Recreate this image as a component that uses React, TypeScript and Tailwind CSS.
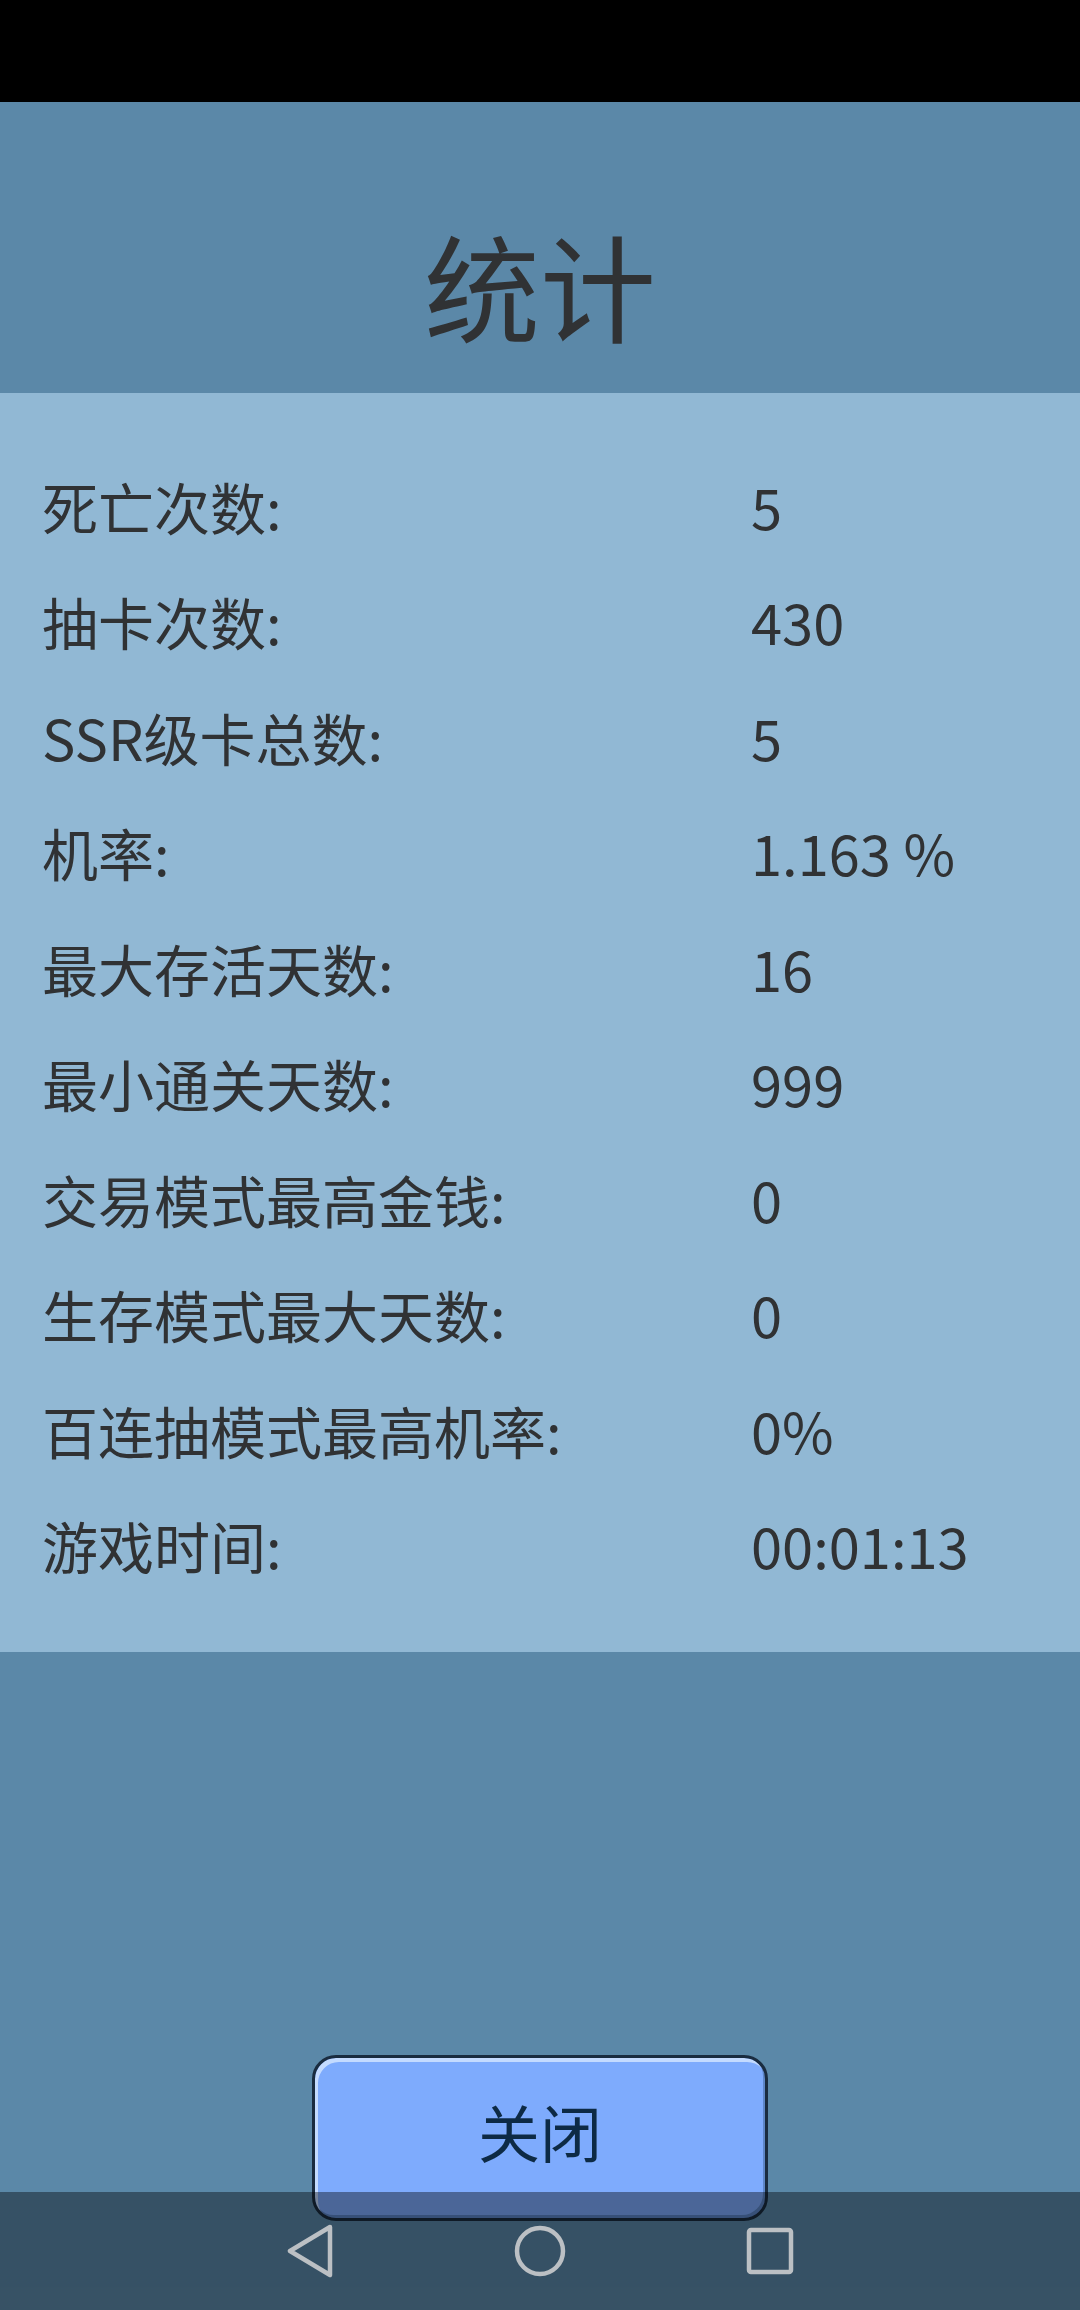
const stats: { label: string; value: string }[] = [
  { label: "死亡次数:", value: "5" },
  { label: "抽卡次数:", value: "430" },
  { label: "SSR级卡总数:", value: "5" },
  { label: "机率:", value: "1.163 %" },
  { label: "最大存活天数:", value: "16" },
  { label: "最小通关天数:", value: "999" },
  { label: "交易模式最高金钱:", value: "0" },
  { label: "生存模式最大天数:", value: "0" },
  { label: "百连抽模式最高机率:", value: "0%" },
  { label: "游戏时间:", value: "00:01:13" },
];

function NavBar() {
  return (
    <div className="absolute bottom-0 left-0 flex h-[118px] w-full items-center justify-center gap-[170px] bg-black/40">
      <div className="flex w-[60px] justify-center">
        <svg width="48" height="54" viewBox="0 0 48 54" fill="none">
          <path
            d="M44 3 L4 27 L44 51 Z"
            stroke="#bcc0c4"
            strokeWidth="4.5"
            strokeLinejoin="round"
          />
        </svg>
      </div>
      <div className="flex w-[60px] justify-center">
        <svg width="54" height="54" viewBox="0 0 54 54" fill="none">
          <circle cx="27" cy="27" r="23" stroke="#bcc0c4" strokeWidth="4.5" />
        </svg>
      </div>
      <div className="flex w-[60px] justify-center">
        <svg width="48" height="48" viewBox="0 0 48 48" fill="none">
          <rect
            x="3"
            y="3"
            width="42"
            height="42"
            rx="2"
            stroke="#bcc0c4"
            strokeWidth="4.5"
          />
        </svg>
      </div>
    </div>
  );
}

export default function App() {
  return (
    <div className="relative flex h-[2310px] w-[1080px] flex-col overflow-hidden bg-[#5b88a8] font-['Noto_Sans_CJK_SC',sans-serif] text-[#303234]">
      <div className="h-[102px] bg-black" />

      <header className="flex h-[291px] justify-center pt-[123px]">
        <h1 className="text-[116px] leading-none">统计</h1>
      </header>

      {/* stats list */}
      <section className="bg-[#91b8d4] px-[42px] pt-[55px] pb-[49px]">
        {stats.map((s) => (
          <div key={s.label} className="flex h-[115.5px] items-center text-[56px] leading-none">
            <span className="w-[709px]">{s.label}</span>
            <span>{s.value}</span>
          </div>
        ))}
      </section>

      <div className="flex justify-center pt-[403px]">
        <button
          type="button"
          className="flex h-[166px] w-[456px] items-center justify-center rounded-[24px] border-[3px] border-[#1a2c40] bg-[#7eabfd] pb-[14px] text-[62px] leading-none text-[#0d2a45] shadow-[inset_3px_4px_0_#c4dbff,inset_-2px_-3px_0_#5d86c8]"
        >
          关闭
        </button>
      </div>

      <NavBar />
    </div>
  );
}
